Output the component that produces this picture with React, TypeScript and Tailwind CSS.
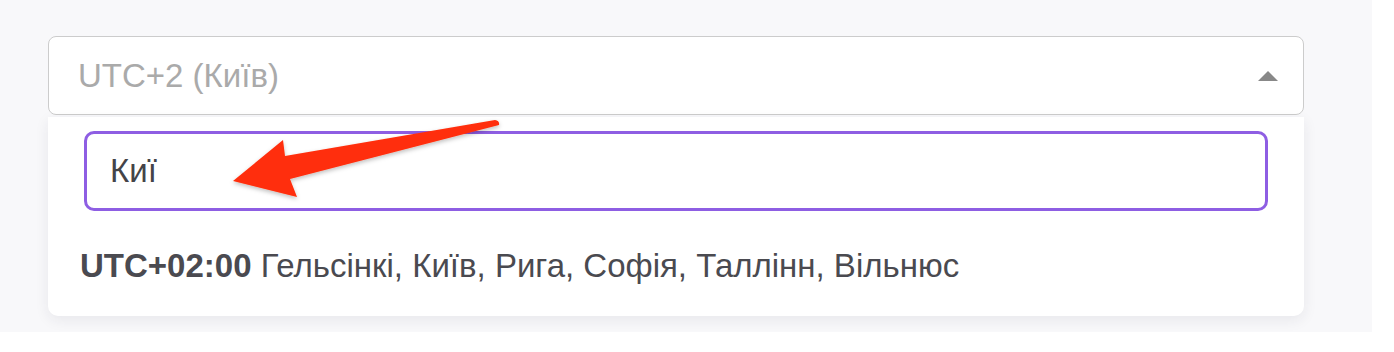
export default function App() {
  return (
    <div className="w-[1394px] h-[352px] bg-white font-['Liberation_Sans',Arial,sans-serif]">
      <div className="relative w-[1372px] h-[332px] bg-[#f8f8fa] pl-12 pt-9">
        {/* select trigger */}
        <div className="w-[1256px] h-[79px] bg-white border border-[#cccccc] rounded-[8px] flex items-center justify-between pl-[29px] pr-[25px]">
          <span className="text-[33px] text-[#aaaaaa]">UTC+2 (Київ)</span>
          <svg width="20" height="10" viewBox="0 0 20 10">
            <path d="M10 0 L20 10 L0 10 Z" fill="#888888" />
          </svg>
        </div>

        {/* dropdown */}
        <div className="mt-[2px] w-[1256px] h-[199px] bg-white rounded-b-[10px] shadow-[0_4px_14px_rgba(40,40,70,0.08)] pt-[14px] pl-9">
          <div className="w-[1184px] h-[80px] border-[3px] border-[#8e5ee3] rounded-[10px] flex items-center pl-[23px]">
            <span className="text-[33px] text-[#444448]">Киї</span>
          </div>
          <div className="mt-[38px] -ml-1 text-[33px] text-[#4a4a50] leading-none">
            <span className="font-bold">UTC+02:00</span> Гельсінкі, Київ, Рига, Софія, Таллінн, Вільнюс
          </div>
        </div>

        {/* annotation arrow */}
        <svg className="absolute left-0 top-0 pointer-events-none" width="1372" height="332">
          <defs>
            <filter id="sh" x="-10%" y="-30%" width="120%" height="160%">
              <feDropShadow dx="0" dy="2" stdDeviation="2" floodColor="#000" floodOpacity="0.25" />
            </filter>
          </defs>
          <path
            d="M233 181 L283 140 L285 156 L495 120 Q500 121 499 125 L290 179 L297 197 Z"
            fill="#ff2d0a"
            filter="url(#sh)"
          />
        </svg>
      </div>
    </div>
  );
}
